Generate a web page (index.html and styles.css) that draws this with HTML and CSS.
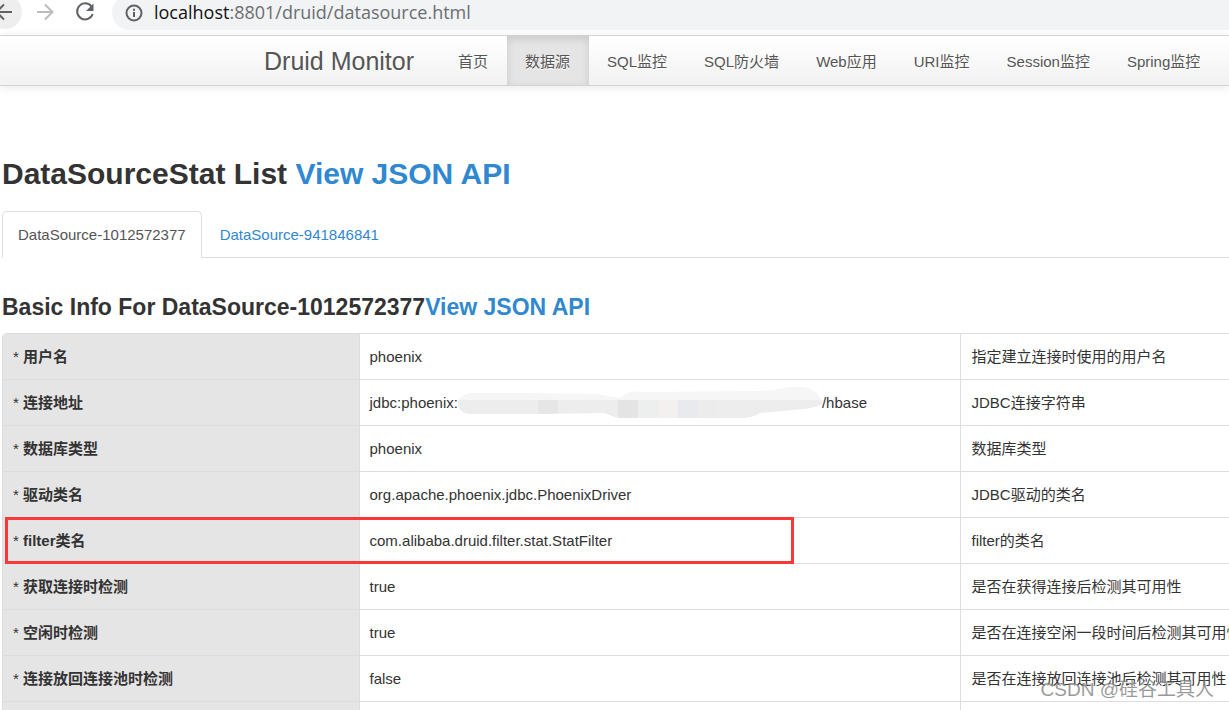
FILE: index.html
```html
<!DOCTYPE html>
<html lang="zh-CN">
<head>
<meta charset="utf-8">
<title>Druid Stat Index</title>
<link rel="stylesheet" href="styles.css">
</head>
<body>
<div class="toolbar">
  <button class="tool back" aria-label="Back"><svg width="24" height="24" viewBox="0 0 24 24"><path d="M20 12H5M12 4.500L4.500 12l7.500 7.500"/></svg></button>
  <button class="tool forward" aria-label="Forward"><svg width="24" height="24" viewBox="0 0 24 24"><path d="M4 12H19M12 4.500L19.500 12 12 19.500"/></svg></button>
  <button class="tool reload" aria-label="Reload"><svg width="24" height="24" viewBox="0 0 24 24"><path d="M18.500 6.500A8 8 0 1 0 19.700 14"/><path class="solid" d="M20.500 3.500v7.500h-7.500z"/></svg></button>
  <div class="address">
    <svg width="18" height="18" viewBox="0 0 18 18"><circle cx="9" cy="9" r="7.500"/><path d="M9 8v5M9 4.800v2"/></svg>
    <span class="url"><b>localhost</b>:8801/druid/datasource.html</span>
  </div>
</div>
<nav class="navbar">
  <a class="brand" href="#">Druid Monitor</a>
  <a class="item" href="#">首页</a>
  <a class="item active" href="#">数据源</a>
  <a class="item" href="#">SQL监控</a>
  <a class="item" href="#">SQL防火墙</a>
  <a class="item" href="#">Web应用</a>
  <a class="item" href="#">URI监控</a>
  <a class="item" href="#">Session监控</a>
  <a class="item" href="#">Spring监控</a>
</nav>
<main class="content">
  <h2>DataSourceStat List <a href="#">View JSON API</a></h2>
  <div class="tabs">
    <a class="tab current" href="#">DataSource-1012572377</a>
    <a class="tab" href="#">DataSource-941846841</a>
  </div>
  <h3>Basic Info For DataSource-1012572377<a href="#">View JSON API</a></h3>
  <table class="info">
    <colgroup><col class="name"><col class="value"><col></colgroup>
    <tbody>
      <tr><th scope="row"><span class="star">* </span>用户名</th><td>phoenix</td><td>指定建立连接时使用的用户名</td></tr>
      <tr><th scope="row"><span class="star">* </span>连接地址</th><td><div class="masked">jdbc:phoenix:<svg class="smudge" width="364" height="32" viewBox="0 0 364 32">
        <defs><clipPath id="blob"><path d="M12 6H65L140 7 162 11 168 7Q174 3 182 5L300 4 322 2Q338-2 350 1 364 7 364 17 356 21 345 22L302 26Q294 31 284 31H160Q152 28 145 26L65 27H10Q0 24 0 16 0 9 12 6Z"/></clipPath></defs>
        <g clip-path="url(#blob)">
          <rect width="364" height="32" fill="#f6f6f6"/>
          <rect y="13" width="364" height="19" fill="#ededed"/>
          <rect x="80" y="13" width="20" height="19" fill="#e6e6e6"/>
          <rect x="160" y="13" width="20" height="19" fill="#e4e4e4"/>
          <rect x="180" y="13" width="20" height="19" fill="#edefee"/>
          <rect x="200" y="13" width="20" height="19" fill="#f2f1ef"/>
          <rect x="220" y="13" width="20" height="19" fill="#e9eaed"/>
          <rect x="240" y="13" width="20" height="19" fill="#ececec"/>
        </g>
        </svg>/hbase</div></td><td>JDBC连接字符串</td></tr>
      <tr><th scope="row"><span class="star">* </span>数据库类型</th><td>phoenix</td><td>数据库类型</td></tr>
      <tr><th scope="row"><span class="star">* </span>驱动类名</th><td>org.apache.phoenix.jdbc.PhoenixDriver</td><td>JDBC驱动的类名</td></tr>
      <tr><th scope="row" class="marked"><span class="star">* </span>filter类名</th><td>com.alibaba.druid.filter.stat.StatFilter</td><td>filter的类名</td></tr>
      <tr><th scope="row"><span class="star">* </span>获取连接时检测</th><td>true</td><td>是否在获得连接后检测其可用性</td></tr>
      <tr><th scope="row"><span class="star">* </span>空闲时检测</th><td>true</td><td>是否在连接空闲一段时间后检测其可用性</td></tr>
      <tr><th scope="row"><span class="star">* </span>连接放回连接池时检测</th><td>false</td><td>是否在连接放回连接池后检测其可用性</td></tr>
      <tr><th scope="row"></th><td></td><td></td></tr>
    </tbody>
  </table>
</main>
<div class="watermark">CSDN @硅谷工具人</div>
</body>
</html>
```

FILE: styles.css
```css
*, *::after { box-sizing: border-box; }
html, body { height: 100%; }
body {
  margin: 0;
  overflow: hidden;
  position: relative;
  background: #fff;
  color: #333;
  font: 15px/23px "Liberation Sans", "Noto Sans CJK SC", sans-serif;
}
a { color: #2f88d0; text-decoration: none; }

.toolbar {
  display: flex;
  height: 36px;
  border-bottom: 1px solid #d9dbdd;
  overflow: hidden;
}
.tool {
  flex: none;
  display: flex;
  align-items: center;
  justify-content: center;
  width: 34px;
  height: 34px;
  margin: -5px 6px 0 0;
  padding: 0;
  border: 0;
  border-radius: 50%;
  background: none;
}
.back { margin-left: -12px; padding-right: 2px; background: #eee; }
.tool svg, .address svg { flex: none; fill: none; stroke: #5f6368; stroke-width: 2; }
.forward svg { stroke: #babcbe; }
.tool .solid { fill: #5f6368; stroke: none; }
.address {
  flex: 1;
  display: flex;
  align-items: center;
  gap: 11px;
  height: 35px;
  margin: -5px 0 0 4px;
  padding-left: 13px;
  border-radius: 18px 0 0 18px;
  background: #f1f3f4;
}
.url { padding-bottom: 2px; color: #6b6e72; font: 18px/24px "Open Sans", "Noto Sans", sans-serif; }
.url b { color: #111; font-weight: 400; }

.navbar {
  display: flex;
  height: 50px;
  padding-left: 246px;
  border-bottom: 1px solid #d4d4d4;
  background: linear-gradient(#fff, #f2f2f2);
  box-shadow: 0 1px 10px rgba(0, 0, 0, .1);
  white-space: nowrap;
}
.brand, .item { color: #555; text-shadow: 0 1px 0 #fff; }
.brand { padding: 0 26px 0 18px; font-size: 25px; line-height: 51px; }
.item { padding: 0 19px 0 18px; line-height: 51px; }
.item.active { background: #e5e5e5; box-shadow: inset 0 3px 8px rgba(0, 0, 0, .125); }

.content { padding: 64px 0 0 2px; }
h2, h3 { margin: 0; font-weight: 700; }
h2 { font-size: 30px; line-height: 48px; }
h3 { margin: 29px 0 6px; font-size: 23px; line-height: 40px; }

.tabs { display: flex; margin-top: 13px; border-bottom: 1px solid #ddd; }
.tab {
  margin: 0 2px -1px 0;
  padding: 11px 15px;
  border: 1px solid transparent;
  border-radius: 5px 5px 0 0;
}
.tab.current { border-color: #ddd #ddd #fff; background: #fff; color: #555; }

.info {
  width: 100%;
  table-layout: fixed;
  border: 1px solid #ddd;
  border-right: 0;
  border-radius: 5px 0 0 0;
  border-spacing: 0;
  white-space: nowrap;
}
.name { width: 29%; }
.value { width: 49.1%; }
.info th, .info td {
  height: 46px;
  padding: 0 10px;
  border-bottom: 1px solid #ddd;
  text-align: left;
  vertical-align: middle;
}
.info th { background: #e5e5e5; font-weight: 700; }
.star { font-weight: 400; }
.info td { border-left: 1px solid #ddd; }
.info tr:first-child th { border-top-left-radius: 4px; }
.marked { position: relative; }
.marked::after {
  content: "";
  position: absolute;
  top: -1px;
  left: 2px;
  width: 789px;
  height: 47px;
  border: 3px solid #fa3838;
}
.masked { display: flex; align-items: center; height: 32px; }
.smudge { flex: none; }

.watermark {
  position: absolute;
  right: 15px;
  bottom: 6px;
  color: rgba(120, 120, 120, .75);
  font: 19px/28px "Liberation Sans", "Noto Sans CJK SC", sans-serif;
  text-shadow: 1px 1px 0 rgba(255, 255, 255, .7);
}
```
